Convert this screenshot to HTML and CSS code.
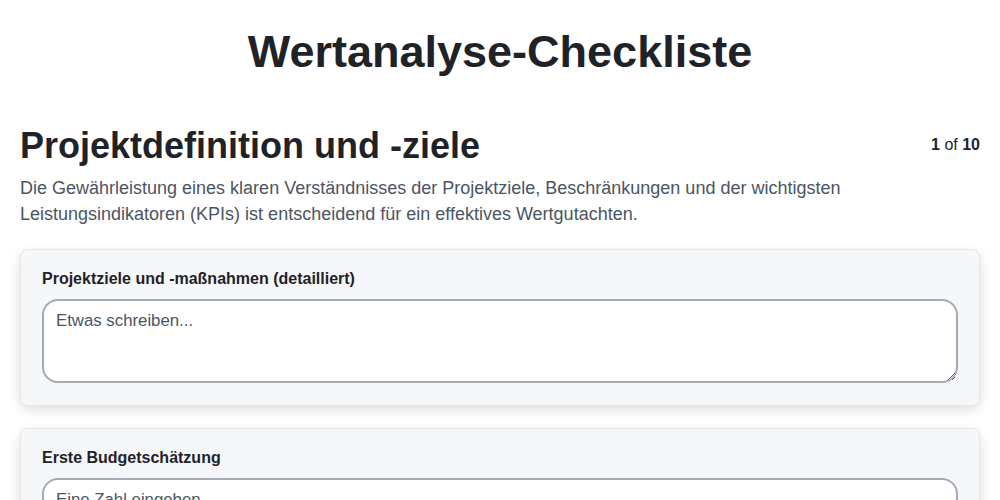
FILE: index.html
```html
<!DOCTYPE html>
<html lang="de">
<head>
<meta charset="utf-8">
<title>Wertanalyse-Checkliste</title>
<link rel="stylesheet" href="styles.css">
</head>
<body>
<main class="page">
  <h1 class="title">Wertanalyse-Checkliste</h1>
  <section class="step">
    <div class="step-head">
      <h2 class="step-title">Projektdefinition und -ziele</h2>
      <div class="step-count"><b>1</b> of <b>10</b></div>
    </div>
    <p class="step-desc">Die Gewährleistung eines klaren Verständnisses der Projektziele, Beschränkungen und der wichtigsten Leistungsindikatoren (KPIs) ist entscheidend für ein effektives Wertgutachten.</p>
    <div class="card">
      <label class="field-label" for="f1">Projektziele und -maßnahmen (detailliert)</label>
      <textarea id="f1" class="field textarea" placeholder="Etwas schreiben..."></textarea>
    </div>
    <div class="card">
      <label class="field-label" for="f2">Erste Budgetschätzung</label>
      <input id="f2" class="field input" type="number" placeholder="Eine Zahl eingeben...">
    </div>
  </section>
</main>
</body>
</html>
```
FILE: styles.css
```css
* { box-sizing: border-box; }
html, body { margin: 0; padding: 0; background: #ffffff; }
body { font-family: "Liberation Sans", Arial, sans-serif; color: #1f2328; }
.page { padding: 0 20px; }
.title {
  margin: 0;
  padding-top: 26px;
  text-align: center;
  font-size: 45px;
  line-height: 52px;
  font-weight: 700;
  color: #1f2328;
}
.step { margin-top: 46px; }
.step-head { display: flex; justify-content: space-between; align-items: flex-start; }
.step-title { margin: 0; font-size: 36px; line-height: 44px; font-weight: 700; color: #1f2328; }
.step-count { font-size: 16px; line-height: 20px; padding-top: 11px; color: #1f2328; }
.step-desc { margin: 7px 0 22px; font-size: 18px; line-height: 26px; color: #4b5563; max-width: 900px; }
.card {
  background: #f6f7f9;
  border: 1px solid #e5e7eb;
  border-radius: 8px;
  box-shadow: 0 4px 12px rgba(0,0,0,0.13);
  padding: 19px 21px 22px;
  margin-bottom: 22px;
}
.field-label { display: block; font-size: 16px; line-height: 20px; font-weight: 700; color: #1f2328; margin-bottom: 10px; }
.field {
  display: block;
  width: 100%;
  border: 2px solid #a3aab3;
  border-radius: 16px;
  background: #fff;
  font-family: "Liberation Sans", Arial, sans-serif;
  font-size: 16.8px;
  color: #1f2328;
  padding: 10px 12px;
}
.field::placeholder { color: #4b5563; opacity: 1; }
.textarea { height: 84px; resize: vertical; }
.input { height: 44px; }
```
